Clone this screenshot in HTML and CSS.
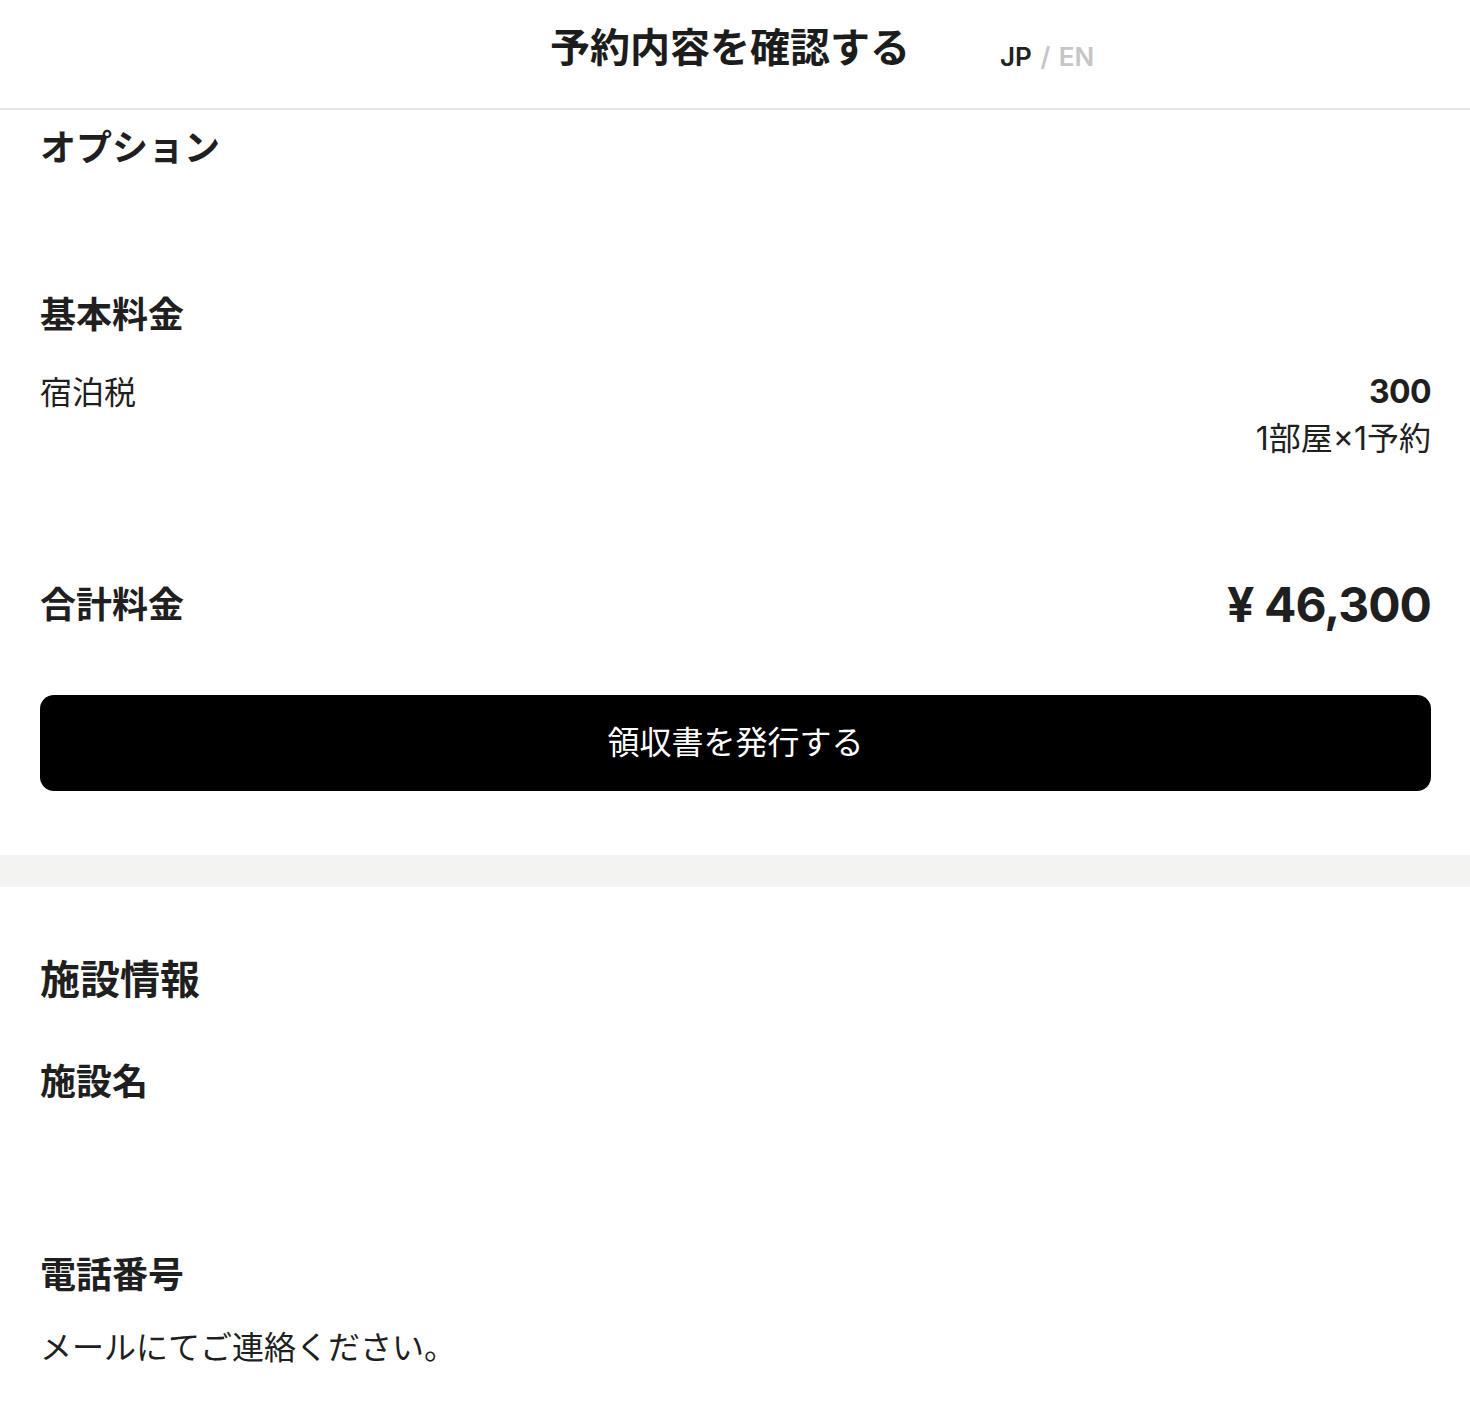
FILE: index.html
```html
<!DOCTYPE html>
<html lang="ja">
<head>
<meta charset="utf-8">
<title>予約内容を確認する</title>
<link rel="stylesheet" href="styles.css">
</head>
<body>
<header class="header">
  <div class="header-side"></div>
  <h1 class="page-title">予約内容を確認する</h1>
  <div class="header-side">
    <div class="lang"><span class="lang-on">JP</span> <span class="lang-off">/ EN</span></div>
  </div>
</header>

<main>
  <section class="panel">
    <h2 class="item-title opt-title">オプション</h2>

    <h2 class="item-title base-title">基本料金</h2>
    <div class="fee-row">
      <div class="fee-name">宿泊税</div>
      <div class="fee-value">
        <div class="fee-amount num">300</div>
        <div class="fee-note"><span class="num">1</span>部屋<span class="num">×1</span>予約</div>
      </div>
    </div>

    <div class="total-row">
      <h2 class="total-label">合計料金</h2>
      <div class="total-amount num">¥ 46,300</div>
    </div>

    <button class="receipt-btn" type="button">領収書を発行する</button>
  </section>

  <div class="band"></div>

  <section class="panel">
    <h2 class="section-title">施設情報</h2>
    <h3 class="item-title facility-name">施設名</h3>
    <h3 class="item-title phone-title">電話番号</h3>
    <p class="body-text">メールにてご連絡ください。</p>
  </section>
</main>
</body>
</html>
```

FILE: styles.css
```css
* {
  box-sizing: border-box;
}

html, body {
  margin: 0;
  padding: 0;
  background: #ffffff;
}

body {
  font-family: "Noto Sans CJK JP", "Noto Sans", sans-serif;
  color: #1f1f1f;
  width: 1470px;
}

h1, h2, h3, p {
  margin: 0;
  font-weight: 700;
}

.num {
  font-family: Inter, "Noto Sans CJK JP", sans-serif;
}

.header {
  display: grid;
  grid-template-columns: 1fr auto 1fr;
  height: 110px;
  padding: 18px 10px 0 0;
  border-bottom: 2px solid #e6e6e6;
}

.page-title {
  font-size: 40px;
  line-height: 54px;
  font-weight: 700;
  color: #1c1c1c;
}

.lang {
  margin-left: 90px;
  margin-top: 24px;
  font-family: Inter, sans-serif;
  font-size: 26px;
  line-height: 30px;
  font-weight: 600;
  word-spacing: 2px;
}

.lang-on {
  color: #222222;
}

.lang-off {
  color: #c6c6c6;
}

.panel {
  padding: 0 39px 0 40px;
  display: flex;
  flex-direction: column;
}

.item-title {
  font-size: 36px;
  line-height: 50px;
  font-weight: 700;
}

.opt-title {
  margin-top: 10px;
}

.base-title {
  margin-top: 117px;
}

.fee-row {
  display: flex;
  justify-content: space-between;
  align-items: flex-start;
  margin-top: 30px;
}

.fee-name {
  font-size: 32px;
  line-height: 46px;
  font-weight: 400;
}

.fee-value {
  text-align: right;
}

.fee-amount {
  padding-top: 4px;
  font-size: 32px;
  line-height: 42px;
  font-weight: 700;
  letter-spacing: -0.02em;
}

.fee-note {
  font-size: 32px;
  line-height: 46px;
  font-weight: 400;
}

.total-row {
  display: flex;
  justify-content: space-between;
  align-items: center;
  margin-top: 110px;
  height: 60px;
}

.total-label {
  font-size: 36px;
  line-height: 50px;
  font-weight: 700;
}

.total-amount {
  padding-top: 6px;
  font-size: 48px;
  line-height: 60px;
  font-weight: 700;
  letter-spacing: -0.02em;
}

.receipt-btn {
  margin-top: 63px;
  height: 96px;
  width: 100%;
  border: none;
  border-radius: 14px;
  background: #000000;
  color: #ffffff;
  font-family: "Noto Sans CJK JP", "Noto Sans", sans-serif;
  font-size: 32px;
  font-weight: 400;
  line-height: 46px;
  padding: 0 0 6px 0;
}

.band {
  margin-top: 64px;
  height: 32px;
  background: #f3f4f2;
}

.section-title {
  margin-top: 62px;
  font-size: 40px;
  line-height: 56px;
  font-weight: 700;
}

.facility-name {
  margin-top: 49px;
}

.phone-title {
  margin-top: 143px;
}

.body-text {
  margin-top: 25px;
  font-size: 32px;
  line-height: 46px;
  font-weight: 400;
}
```
